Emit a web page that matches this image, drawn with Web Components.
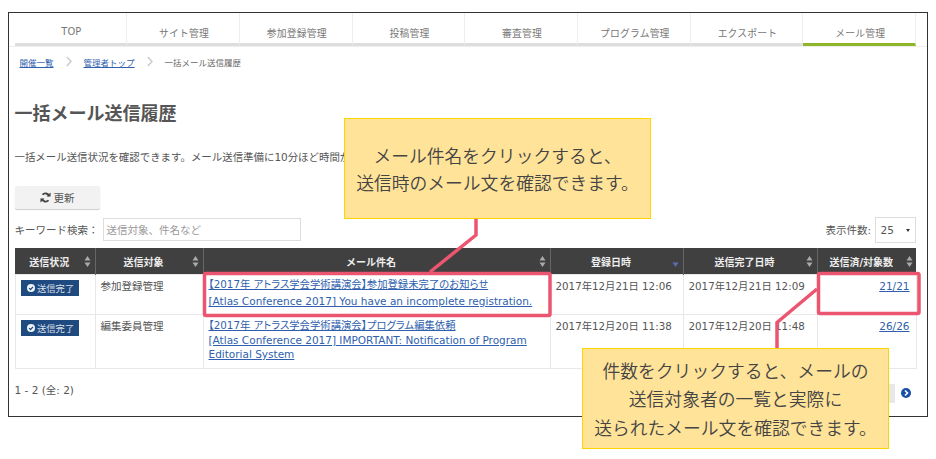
<!DOCTYPE html>
<html lang="ja">
<head>
<meta charset="utf-8">
<title>一括メール送信履歴</title>
<style>
  html, body { margin: 0; background: #fff; }
  body {
    font-family: "DejaVu Sans", "Noto Sans CJK JP", sans-serif;
    font-size: 10.5px;
    color: #555;
  }
</style>
</head>
<body>
<shot-page>
  <tab-bar active="7"></tab-bar>
  <crumb-trail current="一括メール送信履歴">
    <a slot="first" href="#">開催一覧</a>
    <a slot="second" href="#">管理者トップ</a>
  </crumb-trail>
  <page-heading title="一括メール送信履歴">一括メール送信状況を確認できます。メール送信準備に10分ほど時間がかかります。</page-heading>
  <list-tools></list-tools>
  <mail-table></mail-table>
  <pager-row>1 - 2 (全: 2)</pager-row>
</shot-page>

<script>
const LINK_CSS = "a { color: #2f5fae; text-decoration: underline; }";

class ShotPage extends HTMLElement {
  constructor() {
    super();
    this.attachShadow({ mode: "open" });
    this.shadowRoot.innerHTML = `
      <style>
        :host { display: block; position: relative; width: 936px; height: 459px; overflow: hidden; }
        .frame {
          box-sizing: border-box;
          width: 920px;
          height: 405px;
          margin: 0 0 0 8px;
          position: relative;
          top: 12px;
          border: 1.5px solid #333;
          padding: 0 10px 0 5.5px;
          background: #fff;
        }
        .rule { position: absolute; left: 0; top: 0; pointer-events: none; }
      </style>
      <div class="frame"><slot></slot></div>
      <svg class="rule" width="936" height="459" fill="none" stroke="#ec5570">
        <rect x="204.500" y="273.500" width="345.500" height="42" rx="1.500" stroke-width="3.500"/>
        <rect x="818.500" y="273.500" width="100.500" height="40" rx="1.500" stroke-width="3.500"/>
        <path d="M476 218V235L430 272" stroke-width="3.500"/>
        <path d="M777 348V322.500L817 289" stroke-width="3.500"/>
      </svg>
      <note-callout style="left:344px;top:118px;line-height:27px">メール件名をクリックすると、<br>送信時のメール文を確認できます。</note-callout>
      <note-callout style="left:582px;top:348px;line-height:28.500px">件数をクリックすると、メールの<br>送信対象者の一覧と実際に<br>送られたメール文を確認できます。</note-callout>
    `;
  }
}

class NoteCallout extends HTMLElement {
  constructor() {
    super();
    this.attachShadow({ mode: "open" });
    this.shadowRoot.innerHTML = `
      <style>
        :host {
          position: absolute;
          box-sizing: border-box;
          width: 307px;
          height: 101px;
          display: flex;
          align-items: center;
          justify-content: center;
          text-align: center;
          background: #ffe399;
          border: 1px solid #ffd500;
          color: #444;
          font-size: 17.800px;
          font-family: "Noto Sans CJK JP", sans-serif;
          font-weight: 350;
        }
      </style>
      <div><slot></slot></div>
    `;
  }
}

class TabBar extends HTMLElement {
  constructor() {
    super();
    this.attachShadow({ mode: "open" });
  }

  connectedCallback() {
    const names = ["TOP", "サイト管理", "参加登録管理", "投稿管理", "審査管理", "プログラム管理", "エクスポート", "メール管理"];
    const active = parseInt(this.getAttribute("active"));
    const tabs = names
      .map((n, i) => `<div class="tab ${i === active ? "on" : ""}">${n}</div>`)
      .join("");
    this.shadowRoot.innerHTML = `
      <style>
        :host {
          display: block;
          margin-left: -5.500px;
          margin-right: -10px;
          padding-left: 5.500px;
          padding-right: 10px;
          border-bottom: 1px solid #eee;
        }
        .tabs { display: grid; grid-template-columns: repeat(8, 112.700px); }
        .tab {
          height: 33px;
          box-sizing: border-box;
          padding: 13px 0 0 2px;
          text-align: center;
          font-size: 9.800px;
          letter-spacing: 0.200px;
          color: #777;
          border-right: 1px solid #eee;
          border-bottom: 3px solid #ddd;
        }
        .tab.on { border-bottom-color: #8fb52b; }
      </style>
      <div class="tabs">${tabs}</div>
    `;
  }
}

class CrumbTrail extends HTMLElement {
  constructor() {
    super();
    this.attachShadow({ mode: "open" });
    const arrow = `<svg width="6" height="11" fill="none" stroke="#ccc" stroke-width="1.500"><path d="M0.800 1 5 5.500 0.800 10"/></svg>`;
    this.shadowRoot.innerHTML = `
      <style>
        :host {
          display: flex;
          align-items: center;
          gap: 12px;
          padding: 8px 0 0 5px;
          height: 13px;
          font-size: 8.500px;
          color: #666;
        }
        ::slotted(a) { color: #2f5fae; text-decoration: underline; }
        svg { display: block; }
      </style>
      <slot name="first"></slot>${arrow}<slot name="second"></slot>${arrow}
      <span>${this.getAttribute("current")}</span>
    `;
  }
}

class PageHeading extends HTMLElement {
  constructor() {
    super();
    this.attachShadow({ mode: "open" });
    this.shadowRoot.innerHTML = `
      <style>
        :host { display: block; }
        h1 {
          margin: 34px 0 0;
          font-size: 18px;
          line-height: 24px;
          font-weight: 700;
          color: #555;
        }
        p { margin: 23px 0 0; line-height: 16px; white-space: nowrap; font-size: 10.450px; }
      </style>
      <h1>${this.getAttribute("title")}</h1>
      <p><slot></slot></p>
    `;
  }
}

class ListTools extends HTMLElement {
  constructor() {
    super();
    this.attachShadow({ mode: "open" });
    this.shadowRoot.innerHTML = `
      <style>
        :host { display: block; width: 901px; }
        button {
          display: flex;
          align-items: center;
          justify-content: center;
          gap: 3px;
          box-sizing: border-box;
          width: 85px;
          height: 23px;
          margin-top: 21px;
          padding: 0;
          border: 0;
          border-radius: 2px;
          background: #f2f2f2;
          box-shadow: 0 1px 1px #ccc;
          font: inherit;
          color: #555;
        }
        .row { display: flex; align-items: center; margin-top: 7px; }
        .input {
          box-sizing: border-box;
          width: 198px;
          height: 23px;
          margin-left: 4px;
          padding: 4px 3px;
          border: 1px solid #ddd;
          color: #999;
          line-height: 14px;
        }
        .count { margin-left: auto; }
        .select {
          box-sizing: border-box;
          width: 41px;
          height: 26px;
          margin-left: 3.500px;
          padding-left: 5px;
          display: flex;
          align-items: center;
          border: 1px solid #ddd;
          position: relative;
          top: 1px;
        }
        .select::after {
          content: "";
          position: absolute;
          right: 5px;
          top: 11px;
          border: 2.500px solid transparent;
          border-top: 3px solid #333;
          border-bottom: 0;
        }
      </style>
      <button>
        <svg width="11" height="11" viewBox="0 0 12 12" fill="none" stroke="#444" stroke-width="2">
          <path d="M10 4.500A4.300 4.300 0 0 0 2.700 3"/>
          <path d="M2 7.500A4.300 4.300 0 0 0 9.300 9"/>
          <path d="M11.500 0.500V5H7z" fill="#444" stroke="none"/>
          <path d="M0.500 11.500V7H5z" fill="#444" stroke="none"/>
        </svg>
        <span>更新</span>
      </button>
      <div class="row">
        <span>キーワード検索：</span>
        <div class="input">送信対象、件名など</div>
        <span class="count">表示件数:</span>
        <div class="select">25</div>
      </div>
    `;
  }
}

class StatusBadge extends HTMLElement {
  constructor() {
    super();
    this.attachShadow({ mode: "open" });
    this.shadowRoot.innerHTML = `
      <style>
        :host {
          display: inline-flex;
          align-items: center;
          gap: 2.500px;
          box-sizing: border-box;
          width: 58px;
          height: 16px;
          padding-left: 6px;
          background: #1f4a80;
          color: #d9dfe8;
          font-size: 9.300px;
          white-space: nowrap;
        }
      </style>
      <svg width="8" height="8" viewBox="0 0 10 10">
        <circle cx="5" cy="5" r="5" fill="#eef1f5"/>
        <path d="M2.600 5.100 4.400 6.900 7.500 3.500" fill="none" stroke="#1f4a80" stroke-width="1.500"/>
      </svg>
      <slot></slot>
    `;
  }
}

class SortMark extends HTMLElement {
  constructor() {
    super();
    this.attachShadow({ mode: "open" });
    const desc = this.hasAttribute("desc");
    this.shadowRoot.innerHTML = `
      <style>
        :host { position: absolute; right: 3.500px; top: 8px; display: block; width: 7px; height: 11px; }
        svg { display: block; }
      </style>
      <svg width="7" height="11">
        ${desc
          ? '<path d="M0.500 6.500H6.500L3.500 11z" fill="#5a6cb8"/>'
          : '<path d="M3.500 0 6.500 4.500H0.500z" fill="#aaa"/><path d="M0.500 6.500H6.500L3.500 11z" fill="#aaa"/>'}
      </svg>
    `;
  }
}

class MailTable extends HTMLElement {
  constructor() {
    super();
    this.attachShadow({ mode: "open" });
    this._rows = [
      {
        target: "参加登録管理",
        subject: ["【2017年 アトラス学会学術講演会】参加登録未完了のお知らせ", "[Atlas Conference 2017] You have an incomplete registration."],
        created: "2017年12月21日 12:06",
        sent: "2017年12月21日 12:09",
        count: "21/21",
      },
      {
        target: "編集委員管理",
        subject: ["【2017年 アトラス学会学術講演会】プログラム編集依頼", "[Atlas Conference 2017] IMPORTANT: Notification of Program Editorial System"],
        created: "2017年12月20日 11:38",
        sent: "2017年12月20日 11:48",
        count: "26/26",
      },
    ];
  }

  connectedCallback() {
    const heads = ["送信状況", "送信対象", "メール件名", "登録日時", "送信完了日時", "送信済/対象数"];
    const rows = this._rows
      .map(
        (r) => `
        <tr>
          <td><status-badge>送信完了</status-badge></td>
          <td>${r.target}</td>
          <td class="subj"><a class="ja" href="#">${r.subject[0]}</a><br><a href="#">${r.subject[1]}</a></td>
          <td class="date">${r.created}</td>
          <td class="date">${r.sent}</td>
          <td class="num"><a href="#">${r.count}</a></td>
        </tr>`
      )
      .join("");
    this.shadowRoot.innerHTML = `
      <style>
        ${LINK_CSS}
        :host { display: block; width: 901px; margin-top: 6px; }
        table { width: 100%; table-layout: fixed; border-collapse: collapse; }
        th {
          position: relative;
          height: 26px;
          padding: 0 11px 0 0;
          background: #404040;
          color: #eee;
          font-size: 10px;
          font-weight: 700;
          border-left: 1px solid #666;
          white-space: nowrap;
        }
        th:first-child { border-left: 0; }
        td {
          vertical-align: top;
          padding: 4px 5px 0;
          border: 1px solid #e8e8e8;
          line-height: 15px;
          color: #555;
          white-space: nowrap;
        }
        tr:nth-child(1) td { height: 34px; }
        tr:nth-child(2) td { height: 48px; }
        td:first-child { padding-top: 5px; }
        td.date { font-size: 10.300px; }
        td.subj { white-space: normal; padding: 3px 5px 0; line-height: 14.500px; font-size: 10.500px; }
        tr:nth-child(1) td.subj { padding-top: 1px; line-height: 17px; }
        a.ja { font-feature-settings: "palt"; font-size: 10.350px; }
        td.num { text-align: right; padding-right: 6px; }
      </style>
      <table>
        <colgroup>
          <col style="width:80px"><col style="width:108px"><col style="width:347px">
          <col style="width:133px"><col style="width:134px"><col style="width:99px">
        </colgroup>
        <thead>
          <tr>${heads
            .map((h, i) => `<th>${h}<sort-mark ${i === 3 ? "desc" : ""}></sort-mark></th>`)
            .join("")}</tr>
        </thead>
        <tbody>${rows}</tbody>
      </table>
    `;
  }
}

class PagerRow extends HTMLElement {
  constructor() {
    super();
    this.attachShadow({ mode: "open" });
    this.shadowRoot.innerHTML = `
      <style>
        :host { display: flex; align-items: center; width: 901px; margin-top: 10px; height: 20px; }
        .prev { margin: 8px 0 0 auto; width: 20px; height: 19px; background: #e8e8e8; }
        svg { margin: 8px 5px 0 6px; }
      </style>
      <span><slot></slot></span>
      <span class="prev"></span>
      <svg width="10" height="10" viewBox="0 0 10 10">
        <circle cx="5" cy="5" r="5" fill="#1a4fa8"/>
        <path d="M4 2.500 6.500 5 4 7.500" fill="none" stroke="#fff" stroke-width="1.600"/>
      </svg>
    `;
  }
}

// Register children before parents so nested markup upgrades straight away
customElements.define("note-callout", NoteCallout);
customElements.define("status-badge", StatusBadge);
customElements.define("sort-mark", SortMark);
customElements.define("tab-bar", TabBar);
customElements.define("crumb-trail", CrumbTrail);
customElements.define("page-heading", PageHeading);
customElements.define("list-tools", ListTools);
customElements.define("mail-table", MailTable);
customElements.define("pager-row", PagerRow);
customElements.define("shot-page", ShotPage);
</script>
</body>
</html>
